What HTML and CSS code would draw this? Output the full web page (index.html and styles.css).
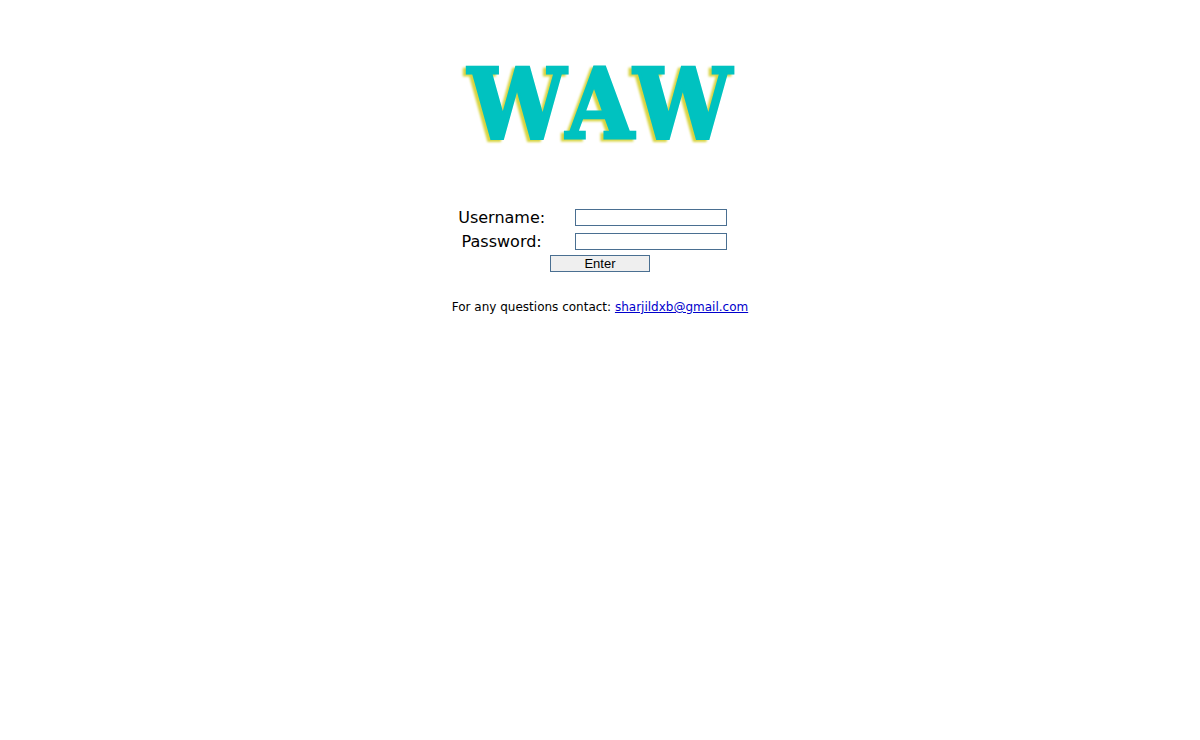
FILE: index.html
```
<!DOCTYPE html>
<html lang="en">
<head>
    <meta charset="UTF-8">
    <meta name="viewport" content="width=device-width, initial-scale=1.0">
    <title>WAW</title>
    <link rel="stylesheet" href="styles.css">
</head>
<body>
    <div class="container">
        <h1 class="logo">WAW</h1>

        <form class="login" method="post">
            <div class="row">
                <label for="username">Username:</label>
                <input type="text" id="username" name="username">
            </div>
            <div class="row">
                <label for="password">Password:</label>
                <input type="password" id="password" name="password">
            </div>
            <button type="submit">Enter</button>
        </form>

        <p class="contact">For any questions contact: <a href="mailto:sharjildxb@gmail.com">sharjildxb@gmail.com</a></p>
    </div>
</body>
</html>
```

FILE: styles.css
```
body {
    margin: 0;
    background: #fff;
    color: #000;
    font-family: Verdana, "DejaVu Sans", sans-serif;
    font-size: 16px;
}

.container {
    display: flex;
    flex-direction: column;
    align-items: center;
    padding-top: 46px;
}

.logo {
    margin: 0;
    color: #00c2c0;
    font-family: "DejaVu Serif Condensed", "DejaVu Serif", serif;
    font-size: 97px;
    font-weight: bold;
    font-kerning: none;
    line-height: 116px;
    -webkit-text-stroke: 3px #00c2c0;
    filter: drop-shadow(-3px 2px 1px #d8d440);
}

.login {
    width: 300px;
    margin-top: 43px;
    text-align: center;
}

.row {
    display: grid;
    grid-template-columns: 1fr 2fr;
    align-items: center;
    justify-items: center;
    height: 24px;
    padding-left: 2px;
}

input {
    box-sizing: border-box;
    width: 152px;
    height: 17px;
    padding: 0 2px;
    border: 1px solid #4a6f91;
    background: #fff;
    font-size: 12px;
}

button {
    display: block;
    width: 100px;
    height: 17px;
    margin: 2px auto 0;
    padding: 0;
    border: 1px solid #4a6f91;
    background: #efefef;
    color: #000;
    font-family: "Liberation Sans", Arial, sans-serif;
    font-size: 13px;
    line-height: 15px;
}

.contact {
    margin: 27px 0 0;
    font-size: 12px;
    line-height: 16px;
}

.contact a {
    color: #0000cc;
}
```
